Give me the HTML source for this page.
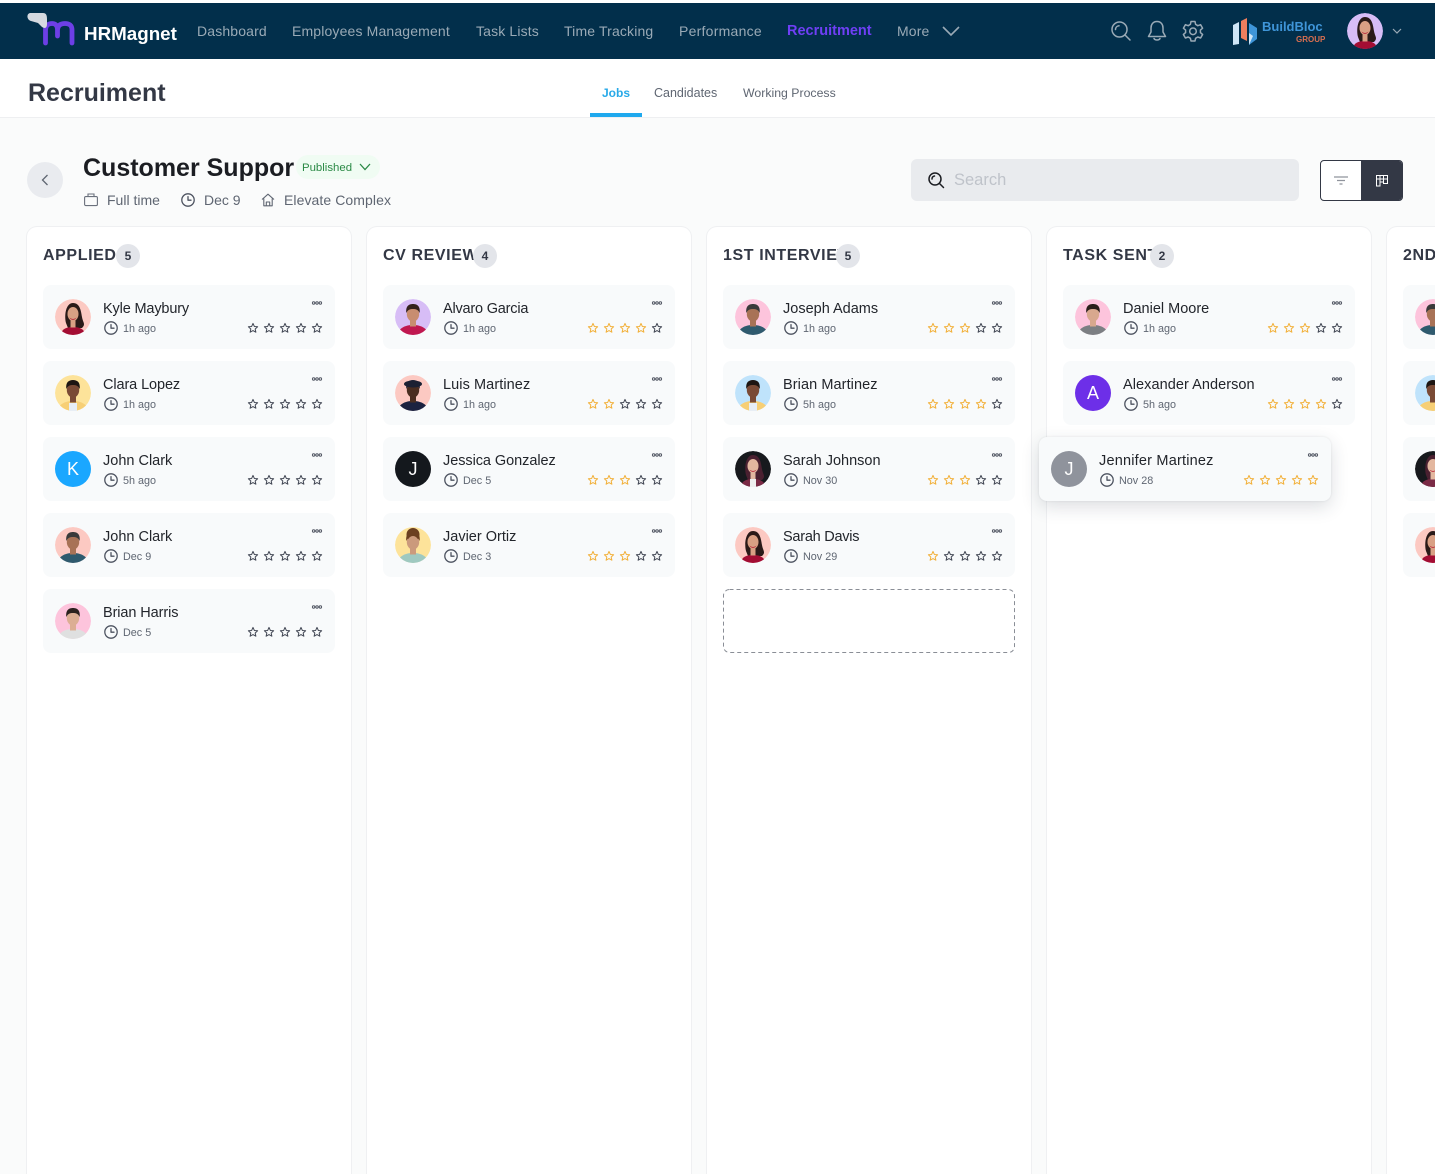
<!DOCTYPE html>
<html lang="en">
<head>
<meta charset="utf-8">
<title>Recruitment</title>
<style>
*{box-sizing:border-box;margin:0;padding:0}
html,body{width:1435px;height:1174px;overflow:hidden;background:#fafbfb;font-family:"Liberation Sans",sans-serif}
body{position:relative}
.a{position:absolute;white-space:nowrap}
svg{display:block;overflow:visible}
#nav{position:absolute;left:0;top:3px;width:1435px;height:56px;background:#022f4b}
.n{position:absolute;top:19px;font-size:14px;line-height:18px;color:#9aaab6;white-space:nowrap;letter-spacing:.15px}
#top{position:absolute;left:0;top:0;width:1435px;height:3px;background:#fff}
#hd{position:absolute;left:0;top:59px;width:1435px;height:59px;background:#fff;border-bottom:1px solid #eeeff1}
.tab{position:absolute;top:84px;line-height:18px;color:#5f6672;white-space:nowrap}
.col{position:absolute;top:227px;width:324px;height:960px;background:#fff;border-radius:10px;box-shadow:0 0 0 1px #eff0f2}
.t{position:absolute;left:16px;top:19px;height:20px;line-height:20px;font-size:16px;font-weight:700;letter-spacing:.6px;color:#333845;overflow:hidden;white-space:nowrap}
.bd{position:absolute;top:17px;width:24px;height:24px;border-radius:50%;background:#e3e5ea;color:#333845;font-size:12px;font-weight:700;line-height:24px;text-align:center}
.c{position:absolute;left:16px;width:292px;height:64px;background:#f8fafb;border-radius:8px}
.c .av{position:absolute;left:12px;top:14px;width:36px;height:36px}
.l{position:absolute;left:12px;top:14px;width:36px;height:36px;border-radius:50%;color:#fff;font-size:18px;line-height:36px;text-align:center}
.c b{position:absolute;left:60px;top:14px;font-weight:400;font-size:14.5px;line-height:20px;color:#22252b;white-space:nowrap}
.c span{position:absolute;left:80px;top:37px;font-size:10.8px;line-height:14px;color:#5f6672;white-space:nowrap}
.c .ck{position:absolute;left:61px;top:36px;width:14px;height:14px}
.c .d{position:absolute;left:269px;top:15px;width:10px;height:6px}
.c .r{position:absolute;left:204px;top:37px;width:76px;height:12px}
</style>
</head>
<body>
<svg width="0" height="0" style="position:absolute">
<defs>
<clipPath id="cp"><circle cx="18" cy="18" r="18"/></clipPath>
<path id="st" transform="translate(6 6.3) scale(.92) translate(-6 -6)" d="M6 .7 7.47 3.98 11.04 4.36 8.38 6.77 9.12 10.29 6 8.5 2.88 10.29 3.62 6.77 .96 4.36 4.53 3.98Z" fill="none" stroke-width="1.1" stroke-linejoin="round"/>
<use id="sd" href="#st" stroke="#444956"/>
<use id="sg" href="#st" stroke="#f2b13c"/>
<g id="g0"><use href="#sd"/><use href="#sd" x="16"/><use href="#sd" x="32"/><use href="#sd" x="48"/><use href="#sd" x="64"/></g>
<g id="g1"><use href="#sg"/><use href="#sd" x="16"/><use href="#sd" x="32"/><use href="#sd" x="48"/><use href="#sd" x="64"/></g>
<g id="g2"><use href="#sg"/><use href="#sg" x="16"/><use href="#sd" x="32"/><use href="#sd" x="48"/><use href="#sd" x="64"/></g>
<g id="g3"><use href="#sg"/><use href="#sg" x="16"/><use href="#sg" x="32"/><use href="#sd" x="48"/><use href="#sd" x="64"/></g>
<g id="g4"><use href="#sg"/><use href="#sg" x="16"/><use href="#sg" x="32"/><use href="#sg" x="48"/><use href="#sd" x="64"/></g>
<g id="g5"><use href="#sg"/><use href="#sg" x="16"/><use href="#sg" x="32"/><use href="#sg" x="48"/><use href="#sg" x="64"/></g>
<g id="ck" fill="none" stroke="#4d5360" stroke-width="1.3" stroke-linecap="round" stroke-linejoin="round"><circle cx="7" cy="7" r="6.2"/><path d="M7 3.6V7.2H10"/></g>
<g id="dt" fill="none" stroke="#555a66" stroke-width="1"><circle cx="1.6" cy="3" r="1.2"/><circle cx="5" cy="3" r="1.2"/><circle cx="8.4" cy="3" r="1.2"/><path d="M2.8 3H3.8M6.2 3H7.2"/></g>
<g id="m" clip-path="url(#cp)"><circle cx="18" cy="18" r="18" fill="var(--b)"/><path d="M2 38C3 29 10 26 18 26S33 29 34 38Z" fill="var(--t)"/><rect x="15" y="19" width="6" height="8.5" fill="var(--s)"/><ellipse cx="18" cy="15" rx="6.2" ry="7.6" fill="var(--s)"/><path d="M11.3 14C10.5 7 14 5 18 5S25.5 7 24.7 14C23 10.5 21 10 18 10S13 10.5 11.3 14Z" fill="var(--h)"/></g>
<g id="w" clip-path="url(#cp)"><circle cx="18" cy="18" r="18" fill="var(--b)"/><path d="M11 24C9 16 11 4 18 4S26 12 27 18 31 25 27 29H13Z" fill="var(--h)"/><path d="M5 38C6 30 11 28 18 28S30 30 31 38Z" fill="var(--t)"/><rect x="15.5" y="20" width="5" height="8.5" fill="var(--s)"/><ellipse cx="18" cy="15" rx="5.5" ry="7" fill="var(--s)"/><path d="M14.5 18.500C16.500 20.500 19.500 20.500 21.500 18.500 20 21.500 16 21.500 14.500 18.500Z" fill="#b3162f"/></g>
</defs>
</svg>

<div id="top"></div>
<div id="nav">
  <svg class="a" style="left:26px;top:8px" width="52" height="38" viewBox="0 0 52 38"><path d="M19.5 32V19C19.5 14 23 12.5 26 12.5S31.5 14 31.5 19V25M31.5 19C31.5 14 35 12.5 39 12.5S46 14 46 19V32" fill="none" stroke="#6d3fe6" stroke-width="4.8" stroke-linecap="round"/><path d="M4 2H17C20 2 21 4 21 8V13C21 17 19 18 16 16L12 12 5 10C1 9 0 3 4 2Z" fill="#d5d9e0"/></svg>
  <div class="a" style="left:84px;top:19px;font-size:18.8px;font-weight:700;line-height:24px;color:#fff">HRMagnet</div>
  <div class="n" style="left:197px">Dashboard</div>
  <div class="n" style="left:292px">Employees Management</div>
  <div class="n" style="left:476px">Task Lists</div>
  <div class="n" style="left:564px">Time Tracking</div>
  <div class="n" style="left:679px;letter-spacing:.25px">Performance</div>
  <div class="n" style="left:787px;font-weight:700;color:#6f3ff5;font-size:14.5px;letter-spacing:0">Recruitment</div>
  <div class="n" style="left:897px">More</div>
  <svg class="a" style="left:942px;top:23px" width="18" height="10" viewBox="0 0 18 10"><path d="M1 1 9 9 17 1" fill="none" stroke="#9aaab6" stroke-width="1.6"/></svg>
  <svg class="a" style="left:1110px;top:17px" width="22" height="22" viewBox="0 0 22 22"><g fill="none" stroke="#9aaab6" stroke-width="1.5" stroke-linecap="round"><circle cx="9.5" cy="9.5" r="7.5"/><path d="M15 15 20 20M5.5 9.5C5.5 7.5 7 6 9 5.8"/></g></svg>
  <svg class="a" style="left:1146px;top:17px" width="22" height="22" viewBox="0 0 22 22"><g fill="none" stroke="#9aaab6" stroke-width="1.5" stroke-linejoin="round" stroke-linecap="round"><path d="M11 1.5C7 1.5 5 4.5 5 8V12L2.5 16.5H19.5L17 12V8C17 4.5 15 1.5 11 1.5Z"/><path d="M8 18.5C9 20.5 13 20.5 14 18.5"/></g></svg>
  <svg class="a" style="left:1182px;top:17px" width="22" height="22" viewBox="0 0 22 22"><g fill="none" stroke="#9aaab6" stroke-width="1.5" stroke-linejoin="round"><path d="M9 1.5H13L13.6 4.4 15.8 5.7 18.6 4.7 20.6 8.2 18.4 10.1V12.6L20.6 14.5 18.6 18 15.8 17 13.6 18.3 13 21H9L8.4 18.3 6.2 17 3.4 18 1.4 14.500 3.6 12.600V10.100L1.4 8.200 3.4 4.700 6.200 5.700 8.400 4.400Z"/><circle cx="11" cy="11.3" r="3.3"/></g></svg>
  <svg class="a" style="left:1233px;top:15px" width="25" height="28" viewBox="0 0 25 28"><path d="M0 7 6 4V26L0 27Z" fill="#cfe6f7"/><path d="M8 3 14 0V23L8 20Z" fill="#f07f5e"/><path d="M16 5 24 10V21L16 27Z" fill="#3f95d8"/><path d="M16 15 20 18 16 27Z" fill="#cfe6f7"/></svg>
  <div class="a" style="left:1262px;top:16px;font-size:13px;font-weight:700;line-height:16px;color:#3f95d8">BuildBloc</div>
  <div class="a" style="left:1296px;top:32px;font-size:8px;font-weight:700;line-height:10px;color:#d96f50">GROUP</div>
  <svg class="a" style="left:1347px;top:10px;--b:#d7bdf6;--t:#a30d33;--s:#d9a084;--h:#2a1a18" width="36" height="36" viewBox="0 0 36 36"><use href="#w"/></svg>
  <svg class="a" style="left:1392px;top:25px" width="10" height="6" viewBox="0 0 10 6"><path d="M1 1 5 5 9 1" fill="none" stroke="#9aaab6" stroke-width="1.2"/></svg>
</div>

<div id="hd"></div>
<div class="a" style="left:28px;top:78px;font-size:25px;font-weight:700;line-height:30px;color:#333845">Recruiment</div>
<div class="tab" style="left:602px;font-size:12px;font-weight:700;color:#27a9e8">Jobs</div>
<div class="a" style="left:590px;top:113px;width:52px;height:4px;background:#1fa9ee"></div>
<div class="tab" style="left:654px;font-size:12.5px">Candidates</div>
<div class="tab" style="left:743px;font-size:12.3px">Working Process</div>

<div class="a" style="left:27px;top:162px;width:36px;height:36px;border-radius:50%;background:#e9ebef"></div>
<svg class="a" style="left:41px;top:174px" width="8" height="12" viewBox="0 0 8 12"><path d="M6.5 1 1.5 6 6.5 11" fill="none" stroke="#5f6672" stroke-width="1.3"/></svg>
<div class="a" style="left:83px;top:152px;width:211px;height:32px;overflow:hidden;font-size:25px;font-weight:700;line-height:32px;color:#1b1d22">Customer Support</div>
<div class="a" style="left:296px;top:155px;width:84px;height:24px;border-radius:12px;background:#f0fcf3"></div>
<div class="a" style="left:302px;top:160px;font-size:11.4px;line-height:16px;color:#2b8a46">Published</div>
<svg class="a" style="left:359px;top:163px" width="12" height="8" viewBox="0 0 12 8"><path d="M1 1 6 6.5 11 1" fill="none" stroke="#2b8a46" stroke-width="1.3"/></svg>

<svg class="a" style="left:84px;top:193px" width="14" height="14" viewBox="0 0 14 14"><g fill="none" stroke="#6a707c" stroke-width="1.1"><rect x=".6" y="3.6" width="12.8" height="9" rx="1.2"/><path d="M4 3.6V1H10V3.6"/></g></svg>
<div class="a" style="left:107px;top:191px;font-size:14px;line-height:18px;color:#5f6672">Full time</div>
<svg class="a" style="left:181px;top:193px" width="14" height="14" viewBox="0 0 14 14"><use href="#ck"/></svg>
<div class="a" style="left:204px;top:191px;font-size:14px;line-height:18px;color:#5f6672">Dec 9</div>
<svg class="a" style="left:261px;top:193px" width="14" height="14" viewBox="0 0 14 14"><g fill="none" stroke="#5f6672" stroke-width="1.1" stroke-linejoin="round"><path d="M1 6.5 7 1.2 13 6.5M2.8 5.5V12.800H11.200V5.500"/><path d="M5.300 12.800V9H8.700V12.800"/></g></svg>
<div class="a" style="left:284px;top:191px;font-size:14px;letter-spacing:.08px;line-height:18px;color:#5f6672">Elevate Complex</div>

<div class="a" style="left:911px;top:159px;width:388px;height:42px;border-radius:6px;background:#e9ebee"></div>
<svg class="a" style="left:927px;top:171px" width="18" height="18" viewBox="0 0 18 18"><g fill="none" stroke="#1b1d22" stroke-width="1.5" stroke-linecap="round"><circle cx="8" cy="8" r="6"/><path d="M12.500 12.500 16.500 16.500M5 8C5 6.500 6 5.300 7.500 5"/></g></svg>
<div class="a" style="left:954px;top:170px;font-size:16.5px;line-height:20px;color:#bfc3ca">Search</div>
<div class="a" style="left:1320px;top:160px;width:83px;height:41px;border:1px solid #333845;border-radius:4px;background:#fff;overflow:hidden"><div class="a" style="left:40px;top:0;width:42px;height:39px;background:#333845"></div></div>
<svg class="a" style="left:1334px;top:176px" width="14" height="9" viewBox="0 0 14 9"><path d="M0 1H14M3 4.500H11M5.500 8H8.500" stroke="#8f939c" stroke-width="1.200"/></svg>
<svg class="a" style="left:1376px;top:175px" width="12" height="12" viewBox="0 0 12 12"><g fill="none" stroke="#fff" stroke-width="1"><rect x=".5" y=".5" width="3.500" height="10.500"/><rect x="4" y=".5" width="3.500" height="6.500"/><rect x="7.500" y=".5" width="4" height="8"/><path d="M.5 4H11.500"/></g></svg>

<!-- COLUMN 1 -->
<div class="col" style="left:27px">
  <div class="t" style="width:73px">APPLIED</div><div class="bd" style="left:89px">5</div>
  <div class="c" style="top:58px"><svg class="av" viewBox="0 0 36 36" style="--b:#fcc9c2;--t:#a30d33;--s:#d9a084;--h:#2a1a18"><use href="#w"/></svg><b style="letter-spacing:-.15px">Kyle Maybury</b><svg class="ck" viewBox="0 0 14 14"><use href="#ck"/></svg><span>1h ago</span><svg class="d" viewBox="0 0 10 6"><use href="#dt"/></svg><svg class="r" viewBox="0 0 76 12"><use href="#g0"/></svg></div>
  <div class="c" style="top:134px"><svg class="av" viewBox="0 0 36 36" style="--b:#fde39a;--t:#f7cf75;--s:#7a4a35;--h:#1d1512"><use href="#m"/><rect x="14" y="28" width="8" height="8" fill="#e8eef5"/></svg><b style="letter-spacing:-.1px">Clara Lopez</b><svg class="ck" viewBox="0 0 14 14"><use href="#ck"/></svg><span>1h ago</span><svg class="d" viewBox="0 0 10 6"><use href="#dt"/></svg><svg class="r" viewBox="0 0 76 12"><use href="#g0"/></svg></div>
  <div class="c" style="top:210px"><div class="l" style="background:#1aa7ff">K</div><b>John Clark</b><svg class="ck" viewBox="0 0 14 14"><use href="#ck"/></svg><span>5h ago</span><svg class="d" viewBox="0 0 10 6"><use href="#dt"/></svg><svg class="r" viewBox="0 0 76 12"><use href="#g0"/></svg></div>
  <div class="c" style="top:286px"><svg class="av" viewBox="0 0 36 36" style="--b:#fcc9c2;--t:#2f5a6e;--s:#a87256;--h:#3a3a3a"><use href="#m"/></svg><b>John Clark</b><svg class="ck" viewBox="0 0 14 14"><use href="#ck"/></svg><span>Dec 9</span><svg class="d" viewBox="0 0 10 6"><use href="#dt"/></svg><svg class="r" viewBox="0 0 76 12"><use href="#g0"/></svg></div>
  <div class="c" style="top:362px"><svg class="av" viewBox="0 0 36 36" style="--b:#fdc4dc;--t:#dfe0e0;--s:#dcae93;--h:#2b221f"><use href="#m"/></svg><b style="letter-spacing:-.1px">Brian Harris</b><svg class="ck" viewBox="0 0 14 14"><use href="#ck"/></svg><span>Dec 5</span><svg class="d" viewBox="0 0 10 6"><use href="#dt"/></svg><svg class="r" viewBox="0 0 76 12"><use href="#g0"/></svg></div>
</div>

<!-- COLUMN 2 -->
<div class="col" style="left:367px">
  <div class="t" style="width:91px">CV REVIEW</div><div class="bd" style="left:106px">4</div>
  <div class="c" style="top:58px"><svg class="av" viewBox="0 0 36 36" style="--b:#d7bdf6;--t:#c01850;--s:#c88d70;--h:#33221c"><use href="#m"/></svg><b style="letter-spacing:-.2px">Alvaro Garcia</b><svg class="ck" viewBox="0 0 14 14"><use href="#ck"/></svg><span>1h ago</span><svg class="d" viewBox="0 0 10 6"><use href="#dt"/></svg><svg class="r" viewBox="0 0 76 12"><use href="#g4"/></svg></div>
  <div class="c" style="top:134px"><svg class="av" viewBox="0 0 36 36" style="--b:#fcc9c2;--t:#1b2240;--s:#4a2d20;--h:#1b2033"><use href="#m"/><ellipse cx="18" cy="9" rx="9" ry="3.500" fill="#1b2033"/></svg><b style="letter-spacing:.08px">Luis Martinez</b><svg class="ck" viewBox="0 0 14 14"><use href="#ck"/></svg><span>1h ago</span><svg class="d" viewBox="0 0 10 6"><use href="#dt"/></svg><svg class="r" viewBox="0 0 76 12"><use href="#g2"/></svg></div>
  <div class="c" style="top:210px"><div class="l" style="background:#14181d">J</div><b style="letter-spacing:-.06px">Jessica Gonzalez</b><svg class="ck" viewBox="0 0 14 14"><use href="#ck"/></svg><span>Dec 5</span><svg class="d" viewBox="0 0 10 6"><use href="#dt"/></svg><svg class="r" viewBox="0 0 76 12"><use href="#g3"/></svg></div>
  <div class="c" style="top:286px"><svg class="av" viewBox="0 0 36 36" style="--b:#fde39a;--t:#9fc9c0;--s:#cb9a7c;--h:#6b3f20"><use href="#m"/><circle cx="18" cy="7.500" r="6.500" fill="#6b3f20"/><ellipse cx="18" cy="15.500" rx="5.500" ry="6.500" fill="#cb9a7c"/></svg><b>Javier Ortiz</b><svg class="ck" viewBox="0 0 14 14"><use href="#ck"/></svg><span>Dec 3</span><svg class="d" viewBox="0 0 10 6"><use href="#dt"/></svg><svg class="r" viewBox="0 0 76 12"><use href="#g3"/></svg></div>
</div>

<!-- COLUMN 3 -->
<div class="col" style="left:707px">
  <div class="t" style="width:115px">1ST INTERVIEW</div><div class="bd" style="left:129px">5</div>
  <div class="c" style="top:58px"><svg class="av" viewBox="0 0 36 36" style="--b:#fdc4dc;--t:#2f5a6e;--s:#a87256;--h:#3a3a3a"><use href="#m"/></svg><b>Joseph Adams</b><svg class="ck" viewBox="0 0 14 14"><use href="#ck"/></svg><span>1h ago</span><svg class="d" viewBox="0 0 10 6"><use href="#dt"/></svg><svg class="r" viewBox="0 0 76 12"><use href="#g3"/></svg></div>
  <div class="c" style="top:134px"><svg class="av" viewBox="0 0 36 36" style="--b:#bfe3fb;--t:#f7cf75;--s:#7a4a35;--h:#1d1512"><use href="#m"/><rect x="14" y="28" width="8" height="8" fill="#e8eef5"/></svg><b style="letter-spacing:.08px">Brian Martinez</b><svg class="ck" viewBox="0 0 14 14"><use href="#ck"/></svg><span>5h ago</span><svg class="d" viewBox="0 0 10 6"><use href="#dt"/></svg><svg class="r" viewBox="0 0 76 12"><use href="#g4"/></svg></div>
  <div class="c" style="top:210px"><svg class="av" viewBox="0 0 36 36" style="--b:#17191d;--t:#7a2a45;--s:#e3b79f;--h:#4a2030"><use href="#w"/><rect x="15" y="28" width="6" height="8" fill="#eee"/></svg><b>Sarah Johnson</b><svg class="ck" viewBox="0 0 14 14"><use href="#ck"/></svg><span>Nov 30</span><svg class="d" viewBox="0 0 10 6"><use href="#dt"/></svg><svg class="r" viewBox="0 0 76 12"><use href="#g3"/></svg></div>
  <div class="c" style="top:286px"><svg class="av" viewBox="0 0 36 36" style="--b:#fcc9c2;--t:#a30d33;--s:#d9a084;--h:#2a1a18"><use href="#w"/></svg><b style="letter-spacing:-.25px">Sarah Davis</b><svg class="ck" viewBox="0 0 14 14"><use href="#ck"/></svg><span>Nov 29</span><svg class="d" viewBox="0 0 10 6"><use href="#dt"/></svg><svg class="r" viewBox="0 0 76 12"><use href="#g1"/></svg></div>
  <svg class="a" style="left:16px;top:362px" width="292" height="64" viewBox="0 0 292 64"><rect x=".5" y=".5" width="291" height="63" rx="6" fill="none" stroke="#8a8e96" stroke-dasharray="4 3"/></svg>
</div>

<!-- COLUMN 4 -->
<div class="col" style="left:1047px">
  <div class="t" style="width:90px">TASK SENT</div><div class="bd" style="left:103px">2</div>
  <div class="c" style="top:58px"><svg class="av" viewBox="0 0 36 36" style="--b:#fdc4dc;--t:#7c7f83;--s:#d8a88e;--h:#2a1f1a"><use href="#m"/></svg><b>Daniel Moore</b><svg class="ck" viewBox="0 0 14 14"><use href="#ck"/></svg><span>1h ago</span><svg class="d" viewBox="0 0 10 6"><use href="#dt"/></svg><svg class="r" viewBox="0 0 76 12"><use href="#g3"/></svg></div>
  <div class="c" style="top:134px"><div class="l" style="background:#6d2fe8">A</div><b style="letter-spacing:.06px">Alexander Anderson</b><svg class="ck" viewBox="0 0 14 14"><use href="#ck"/></svg><span>5h ago</span><svg class="d" viewBox="0 0 10 6"><use href="#dt"/></svg><svg class="r" viewBox="0 0 76 12"><use href="#g4"/></svg></div>
</div>

<!-- COLUMN 5 -->
<div class="col" style="left:1387px">
  <div class="t" style="width:60px">2ND INTERVIEW</div>
  <div class="c" style="top:58px"><svg class="av" viewBox="0 0 36 36" style="--b:#fdc4dc;--t:#2f5a6e;--s:#a87256;--h:#3a3a3a"><use href="#m"/></svg></div>
  <div class="c" style="top:134px"><svg class="av" viewBox="0 0 36 36" style="--b:#bfe3fb;--t:#f7cf75;--s:#7a4a35;--h:#1d1512"><use href="#m"/></svg></div>
  <div class="c" style="top:210px"><svg class="av" viewBox="0 0 36 36" style="--b:#17191d;--t:#7a2a45;--s:#e3b79f;--h:#4a2030"><use href="#w"/></svg></div>
  <div class="c" style="top:286px"><svg class="av" viewBox="0 0 36 36" style="--b:#fcc9c2;--t:#a30d33;--s:#d9a084;--h:#2a1a18"><use href="#w"/></svg></div>
</div>

<!-- DRAGGED CARD -->
<div class="c" style="left:1039px;top:437px;box-shadow:0 6px 18px rgba(40,50,70,.16),0 0 2px rgba(40,50,70,.1)"><div class="l" style="background:#8f939c">J</div><b style="letter-spacing:.2px">Jennifer Martinez</b><svg class="ck" viewBox="0 0 14 14"><use href="#ck"/></svg><span>Nov 28</span><svg class="d" viewBox="0 0 10 6"><use href="#dt"/></svg><svg class="r" viewBox="0 0 76 12"><use href="#g5"/></svg></div>
</body>
</html>
